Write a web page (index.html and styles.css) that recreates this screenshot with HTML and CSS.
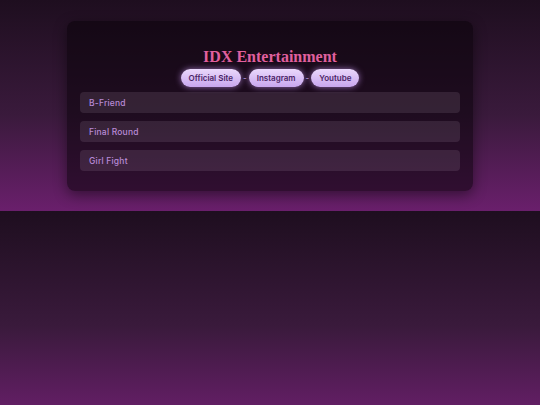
FILE: index.html
```html
<!DOCTYPE html>
<html>
<head>
<meta charset="utf-8">
<link rel="stylesheet" href="styles.css">
</head>
<body>
<div class="card">
  <h1 class="title">IDX Entertainment</h1>
  <div class="links">
    <a class="pill">Official Site</a><span class="sep">-</span><a class="pill">Instagram</a><span class="sep">-</span><a class="pill">Youtube</a>
  </div>
  <ul class="list">
    <li class="item">B-Friend</li>
    <li class="item">Final Round</li>
    <li class="item">Girl Fight</li>
  </ul>
</div>
</body>
</html>
```
FILE: styles.css
```css
html, body { margin: 0; }
body {
  padding: 21px 0 20px;
  background: linear-gradient(to bottom, #1e0e1f 0%, #3a1a3c 55%, #6a1f6c 100%);
  font-family: Inter, "Noto Sans", sans-serif;
}
.card {
  width: 406px;
  margin: 0 auto;
  box-sizing: border-box;
  padding: 25px 13px 20px;
  background: rgba(10, 2, 10, 0.55);
  border-radius: 8px;
  box-shadow: 0 4px 14px rgba(0, 0, 0, 0.45);
}
.title {
  margin: 0;
  text-align: center;
  font-family: "Liberation Serif", serif;
  font-weight: bold;
  font-size: 16px;
  line-height: 22px;
  color: #e0609e;
}
.links {
  margin-top: 1px;
  display: flex;
  justify-content: center;
  align-items: center;
  height: 18px;
}
.pill {
  display: inline-flex;
  align-items: center;
  height: 18px;
  padding: 0 8px;
  border-radius: 9px;
  background: linear-gradient(to bottom, #ead8fb, #c8a6ee);
  color: #4a2466;
  font-size: 8px;
  font-weight: 600;
  box-shadow: 0 0 6px rgba(200, 150, 240, 0.7);
}
.sep {
  color: #c8a6ee;
  font-size: 8px;
  padding: 0 2px;
}
.list {
  list-style: none;
  margin: 5px 0 0;
  padding: 0;
  display: flex;
  flex-direction: column;
  gap: 8px;
}
.item {
  height: 21px;
  display: flex;
  align-items: center;
  padding: 0 9px;
  border-radius: 4px;
  background: rgba(255, 235, 255, 0.1);
  color: #b88ad6;
  font-size: 8.5px;
  font-weight: 500;
  letter-spacing: 0.2px;
}
```
